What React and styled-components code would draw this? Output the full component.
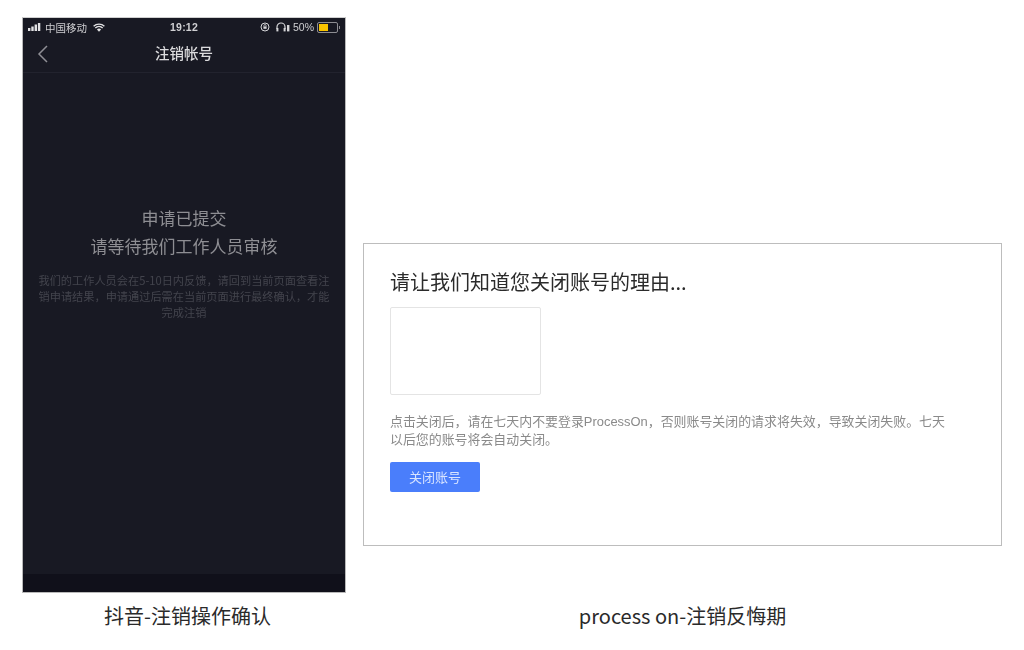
import React from "react"
import styled, { createGlobalStyle } from "styled-components"

const CJK = `"Noto Sans CJK SC", "Noto Sans", sans-serif`
const UI = `"Liberation Sans", "Noto Sans CJK SC", sans-serif`

const App = () => {
  return (
    <Page>
      <GlobalStyle />
      <PhoneFigure>
        <Phone>
          <StatusBar>
            <StatusLeft>
              <Signal viewBox="0 0 14 8">
                <rect x="0" y="5" width="2.4" height="3" />
                <rect x="3.3" y="3.5" width="2.4" height="4.5" />
                <rect x="6.6" y="1.5" width="2.4" height="6.5" />
                <rect x="9.9" y="0" width="2.4" height="8" />
              </Signal>
              <span>中国移动</span>
              <Wifi viewBox="0 0 12 9">
                <path d="M0.6 3.2 A8 8 0 0 1 11.4 3.2" />
                <path d="M2.3 5 A5.4 5.4 0 0 1 9.7 5" />
                <path d="M6 8.8 L3.9 6.6 A3 3 0 0 1 8.1 6.6 Z" className="core" />
              </Wifi>
            </StatusLeft>
            <StatusTime>19:12</StatusTime>
            <StatusRight>
              <Lock viewBox="0 0 10 10">
                <circle cx="5" cy="5" r="4" />
                <rect x="3.4" y="4.4" width="3.2" height="2.4" />
                <path d="M3.9 4.4 V3.6 A1.1 1.1 0 0 1 6.1 3.6 V4.4" />
              </Lock>
              <Headphones viewBox="0 0 14 10">
                <path d="M1 7 V5 A4 4 0 0 1 9 5 V7" />
                <rect x="0.4" y="6" width="2" height="3.4" />
                <rect x="7.6" y="6" width="2" height="3.4" />
                <rect x="11" y="3" width="2.4" height="6.4" />
              </Headphones>
              <span>50%</span>
              <Battery>
                <BatteryFill />
              </Battery>
              <BatteryCap />
            </StatusRight>
          </StatusBar>
          <NavBar>
            <BackIcon viewBox="0 0 12 18">
              <path d="M10 1 L2 9 L10 17" />
            </BackIcon>
            <NavTitle>注销帐号</NavTitle>
          </NavBar>
          <PhoneBody>
            <Heading>申请已提交</Heading>
            <Heading>请等待我们工作人员审核</Heading>
            <Notice>
              我们的工作人员会在5-10日内反馈，请回到当前页面查看注销申请结果，申请通过后需在当前页面进行最终确认，才能完成注销
            </Notice>
          </PhoneBody>
          <PhoneFooter />
        </Phone>
        <Caption $shift={7}>抖音-注销操作确认</Caption>
      </PhoneFigure>
      <WebFigure>
        <Card>
          <CardTitle>请让我们知道您关闭账号的理由...</CardTitle>
          <Reason />
          <Hint>
            点击关闭后，请在七天内不要登录ProcessOn，否则账号关闭的请求将失效，导致关闭失败。七天以后您的账号将会自动关闭。
          </Hint>
          <CloseButton>关闭账号</CloseButton>
        </Card>
        <Caption>process on-注销反悔期</Caption>
      </WebFigure>
    </Page>
  )
}

/**********BEGIN STYLING**********/
const GlobalStyle = createGlobalStyle`
  html, body {
    margin: 0;
    padding: 0;
    background: #ffffff;
  }
  body {
    font-family: ${CJK};
  }
`
const Page = styled.div`
  display: flex;
  width: 1024px;
  height: 650px;
  box-sizing: border-box;
  padding: 17px 22px 0 22px;
  gap: 17px;
  overflow: hidden;
`
const PhoneFigure = styled.div`
  display: flex;
  flex-direction: column;
  width: 324px;
`
const WebFigure = styled.div`
  display: flex;
  flex-direction: column;
  width: 639px;
  padding-top: 226px;
`
const Caption = styled.div`
  height: 46px;
  line-height: 46px;
  padding-left: ${props => props.$shift || 0}px;
  text-align: center;
  font-size: 20px;
  color: #2a2a2a;
  white-space: nowrap;
`
const Phone = styled.div`
  display: flex;
  flex-direction: column;
  height: 576px;
  box-sizing: border-box;
  background: #181923;
  border: 1px solid #b9b9b9;
  border-top-color: #d0d0d0;
  filter: blur(0.4px);
`
const StatusBar = styled.div`
  display: grid;
  grid-template-columns: 1fr auto 1fr;
  align-items: center;
  height: 18px;
  padding: 0 5px;
  font-family: ${UI};
  font-size: 10.5px;
  color: #cfcfd2;
`
const StatusLeft = styled.div`
  display: flex;
  align-items: center;
  gap: 3px;
`
const StatusTime = styled.div`
  font-weight: 700;
  letter-spacing: 0.2px;
  color: #d0d0d3;
`
const StatusRight = styled.div`
  display: flex;
  align-items: center;
  justify-content: flex-end;
  gap: 3px;
`
const Signal = styled.svg`
  width: 14px;
  height: 8px;
  fill: #e2e2e4;
`
const Wifi = styled.svg`
  width: 12px;
  height: 9px;
  margin-left: 3px;
  fill: none;
  path {
    stroke: #e2e2e4;
    stroke-width: 1.4;
  }
  .core {
    fill: #e2e2e4;
    stroke: none;
  }
`
const Lock = styled.svg`
  width: 10px;
  height: 10px;
  margin-right: 3px;
  fill: #d5d5d8;
  circle {
    fill: none;
    stroke: #d5d5d8;
    stroke-width: 1;
  }
  path {
    fill: none;
    stroke: #d5d5d8;
    stroke-width: 0.8;
  }
`
const Headphones = styled.svg`
  width: 14px;
  height: 10px;
  fill: #d5d5d8;
  path {
    fill: none;
    stroke: #d5d5d8;
    stroke-width: 1.2;
  }
`
const Battery = styled.div`
  width: 17px;
  height: 7px;
  padding: 1px;
  border: 1px solid #8d8d92;
  border-radius: 2px;
  box-sizing: content-box;
`
const BatteryFill = styled.div`
  width: 9px;
  height: 100%;
  background: #f8c300;
`
const BatteryCap = styled.div`
  width: 1px;
  height: 3px;
  margin-left: -2px;
  background: #8d8d92;
`
const NavBar = styled.div`
  position: relative;
  display: flex;
  align-items: center;
  justify-content: center;
  height: 37px;
  padding-bottom: 3px;
  box-sizing: border-box;
  border-bottom: 1px solid #22232e;
`
const BackIcon = styled.svg`
  position: absolute;
  left: 14px;
  top: 9px;
  width: 12px;
  height: 18px;
  fill: none;
  stroke: #8f8f95;
  stroke-width: 1.5;
`
const NavTitle = styled.div`
  font-size: 14.5px;
  font-weight: 500;
  color: #dcdcde;
`
const PhoneBody = styled.div`
  flex: 1;
  display: flex;
  flex-direction: column;
  align-items: center;
  padding: 131px 14px 0 14px;
`
const Heading = styled.div`
  font-size: 17px;
  line-height: 27.5px;
  color: #8e8e93;
`
const Notice = styled.div`
  margin-top: 13px;
  font-size: 11.2px;
  line-height: 16px;
  text-align: center;
  color: #43444d;
`
const PhoneFooter = styled.div`
  height: 18px;
  background: #10101a;
`
const Card = styled.div`
  display: flex;
  flex-direction: column;
  align-items: flex-start;
  height: 303px;
  box-sizing: border-box;
  margin-bottom: 47px;
  padding: 23px 26px 0 26px;
  border: 1px solid #bdbdbd;
`
const CardTitle = styled.div`
  font-size: 20px;
  line-height: 30px;
  color: #2b2b2b;
  filter: blur(0.3px);
`
const Reason = styled.div`
  width: 151px;
  height: 88px;
  margin-top: 10px;
  box-sizing: border-box;
  border: 1px solid #e4e4e4;
  border-radius: 2px;
`
const Hint = styled.div`
  width: 560px;
  margin-top: 18px;
  font-family: ${UI};
  font-size: 12.93px;
  line-height: 18px;
  color: #8a8a8a;
  filter: blur(0.3px);
`
const CloseButton = styled.div`
  width: 90px;
  height: 30px;
  margin-top: 13px;
  line-height: 30px;
  text-align: center;
  font-size: 13px;
  color: #d8e4ff;
  background: #4a7efb;
  border-radius: 2px;
  filter: blur(0.3px);
`
/**********END STYLING**********/

export default App
